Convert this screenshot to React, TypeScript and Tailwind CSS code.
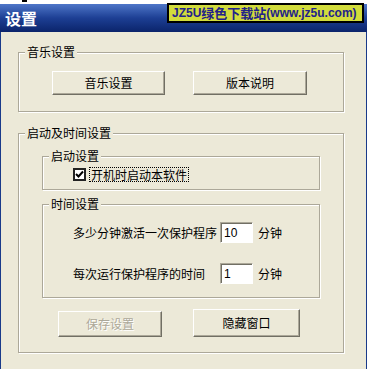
import React from "react";

const cjk = "font-['Noto_Sans_CJK_SC','Liberation_Sans',sans-serif]";

function GroupBox({
  label,
  className = "",
  children,
}: {
  label: string;
  className?: string;
  children: React.ReactNode;
}) {
  return (
    <div
      className={`relative border border-[#aca899] shadow-[inset_1px_1px_0_#fff,1px_1px_0_#fff] ${className}`}
    >
      <span className="absolute left-[6px] top-[-8px] bg-[#ece9d8] px-[2px] text-[12px] leading-[14px] text-black">
        {label}
      </span>
      {children}
    </div>
  );
}

function WinButton({
  children,
  disabled = false,
  className = "",
}: {
  children: React.ReactNode;
  disabled?: boolean;
  className?: string;
}) {
  return (
    <button
      disabled={disabled}
      className={`flex items-center justify-center border border-t-white border-l-white border-b-[#716f64] border-r-[#716f64] bg-[#ece9d8] text-[12px] leading-[14px] shadow-[inset_-1px_-1px_0_#aca899] ${
        disabled ? "text-[#aca899] [text-shadow:1px_1px_0_#fff]" : "text-black"
      } ${className}`}
    >
      {children}
    </button>
  );
}

function NumInput({ value }: { value: string }) {
  return (
    <div className="flex h-[21px] w-[33px] items-center border border-t-[#aca899] border-l-[#aca899] border-b-white border-r-white bg-white pl-[3px] shadow-[inset_1px_1px_0_#716f64] font-['Liberation_Sans',sans-serif] text-[12px] leading-[14px] text-black">
      {value}
    </div>
  );
}

export default function App() {
  return (
    <div className={`flex h-[369px] w-[367px] flex-col overflow-hidden bg-white ${cjk}`}>
      {/* strip of desktop above the window */}
      <div className="flex h-[4px] shrink-0 items-start bg-white">
        <span className="ml-[22px] h-[2px] w-[5px] bg-black" />
      </div>

      {/* title bar */}
      <div className="relative flex h-[28px] shrink-0 items-center bg-gradient-to-b from-[#4f76c8] via-[#1d3f94] to-[#0b246b] pl-[5px]">
        <span className="text-[16px] font-bold leading-[18px] text-white">设置</span>
        <div className="absolute left-[167px] top-[-1px] flex h-[20px] w-[197px] items-center border-2 border-black bg-[#d2dc3c] pl-[3px] font-bold text-[#22228a]">
          <span className="font-['Liberation_Sans',sans-serif] text-[12px] leading-[14px]">JZ5U</span>
          <span className="text-[13px] leading-[14px]">绿色下载站</span>
          <span className="font-['Liberation_Sans',sans-serif] text-[12px] leading-[14px]">(www.jz5u.com)</span>
        </div>
      </div>

      {/* window body */}
      <div className="flex flex-1 flex-col border-x border-[#193a8a] bg-[#ece9d8] pl-[17px] pt-[20px] text-[12px] leading-[14px] text-black">
        <GroupBox label="音乐设置" className="w-[326px] pb-[16px] pl-[33px] pt-[18px]">
          <div className="flex gap-[28px]">
            <WinButton className="h-[24px] w-[113px]">音乐设置</WinButton>
            <WinButton className="h-[24px] w-[114px]">版本说明</WinButton>
          </div>
        </GroupBox>

        <GroupBox label="启动及时间设置" className="mt-[21px] w-[326px] px-[23px] pb-[15px] pt-[22px]">
          <GroupBox label="启动设置" className="pb-[7px] pl-[30px] pt-[10px]">
            <div className="flex h-[15px] items-center">
              <span className="flex h-[13px] w-[13px] items-center justify-center border-2 border-[#222] bg-white">
                <svg width="9" height="9" viewBox="0 0 9 9">
                  <polyline points="1,4 3.5,6.5 8,1.5" fill="none" stroke="#000" strokeWidth="2" />
                </svg>
              </span>
              <span className="ml-[3px] flex h-[15px] items-center border border-dotted border-black px-[1px]">
                开机时启动本软件
              </span>
            </div>
          </GroupBox>

          <GroupBox label="时间设置" className="mt-[14px] pb-[13px] pl-[30px] pt-[17px]">
            <div className="flex h-[21px] items-center">
              <span className="w-[147px]">多少分钟激活一次保护程序</span>
              <NumInput value="10" />
              <span className="ml-[5px]">分钟</span>
            </div>
            <div className="mt-[20px] flex h-[21px] items-center">
              <span className="w-[147px]">每次运行保护程序的时间</span>
              <NumInput value="1" />
              <span className="ml-[5px]">分钟</span>
            </div>
          </GroupBox>

          <div className="mt-[11px] flex items-end gap-[31px] pl-[16px]">
            <WinButton disabled className="h-[26px] w-[104px]">
              保存设置
            </WinButton>
            <WinButton className="h-[28px] w-[107px]">隐藏窗口</WinButton>
          </div>
        </GroupBox>
      </div>
    </div>
  );
}
